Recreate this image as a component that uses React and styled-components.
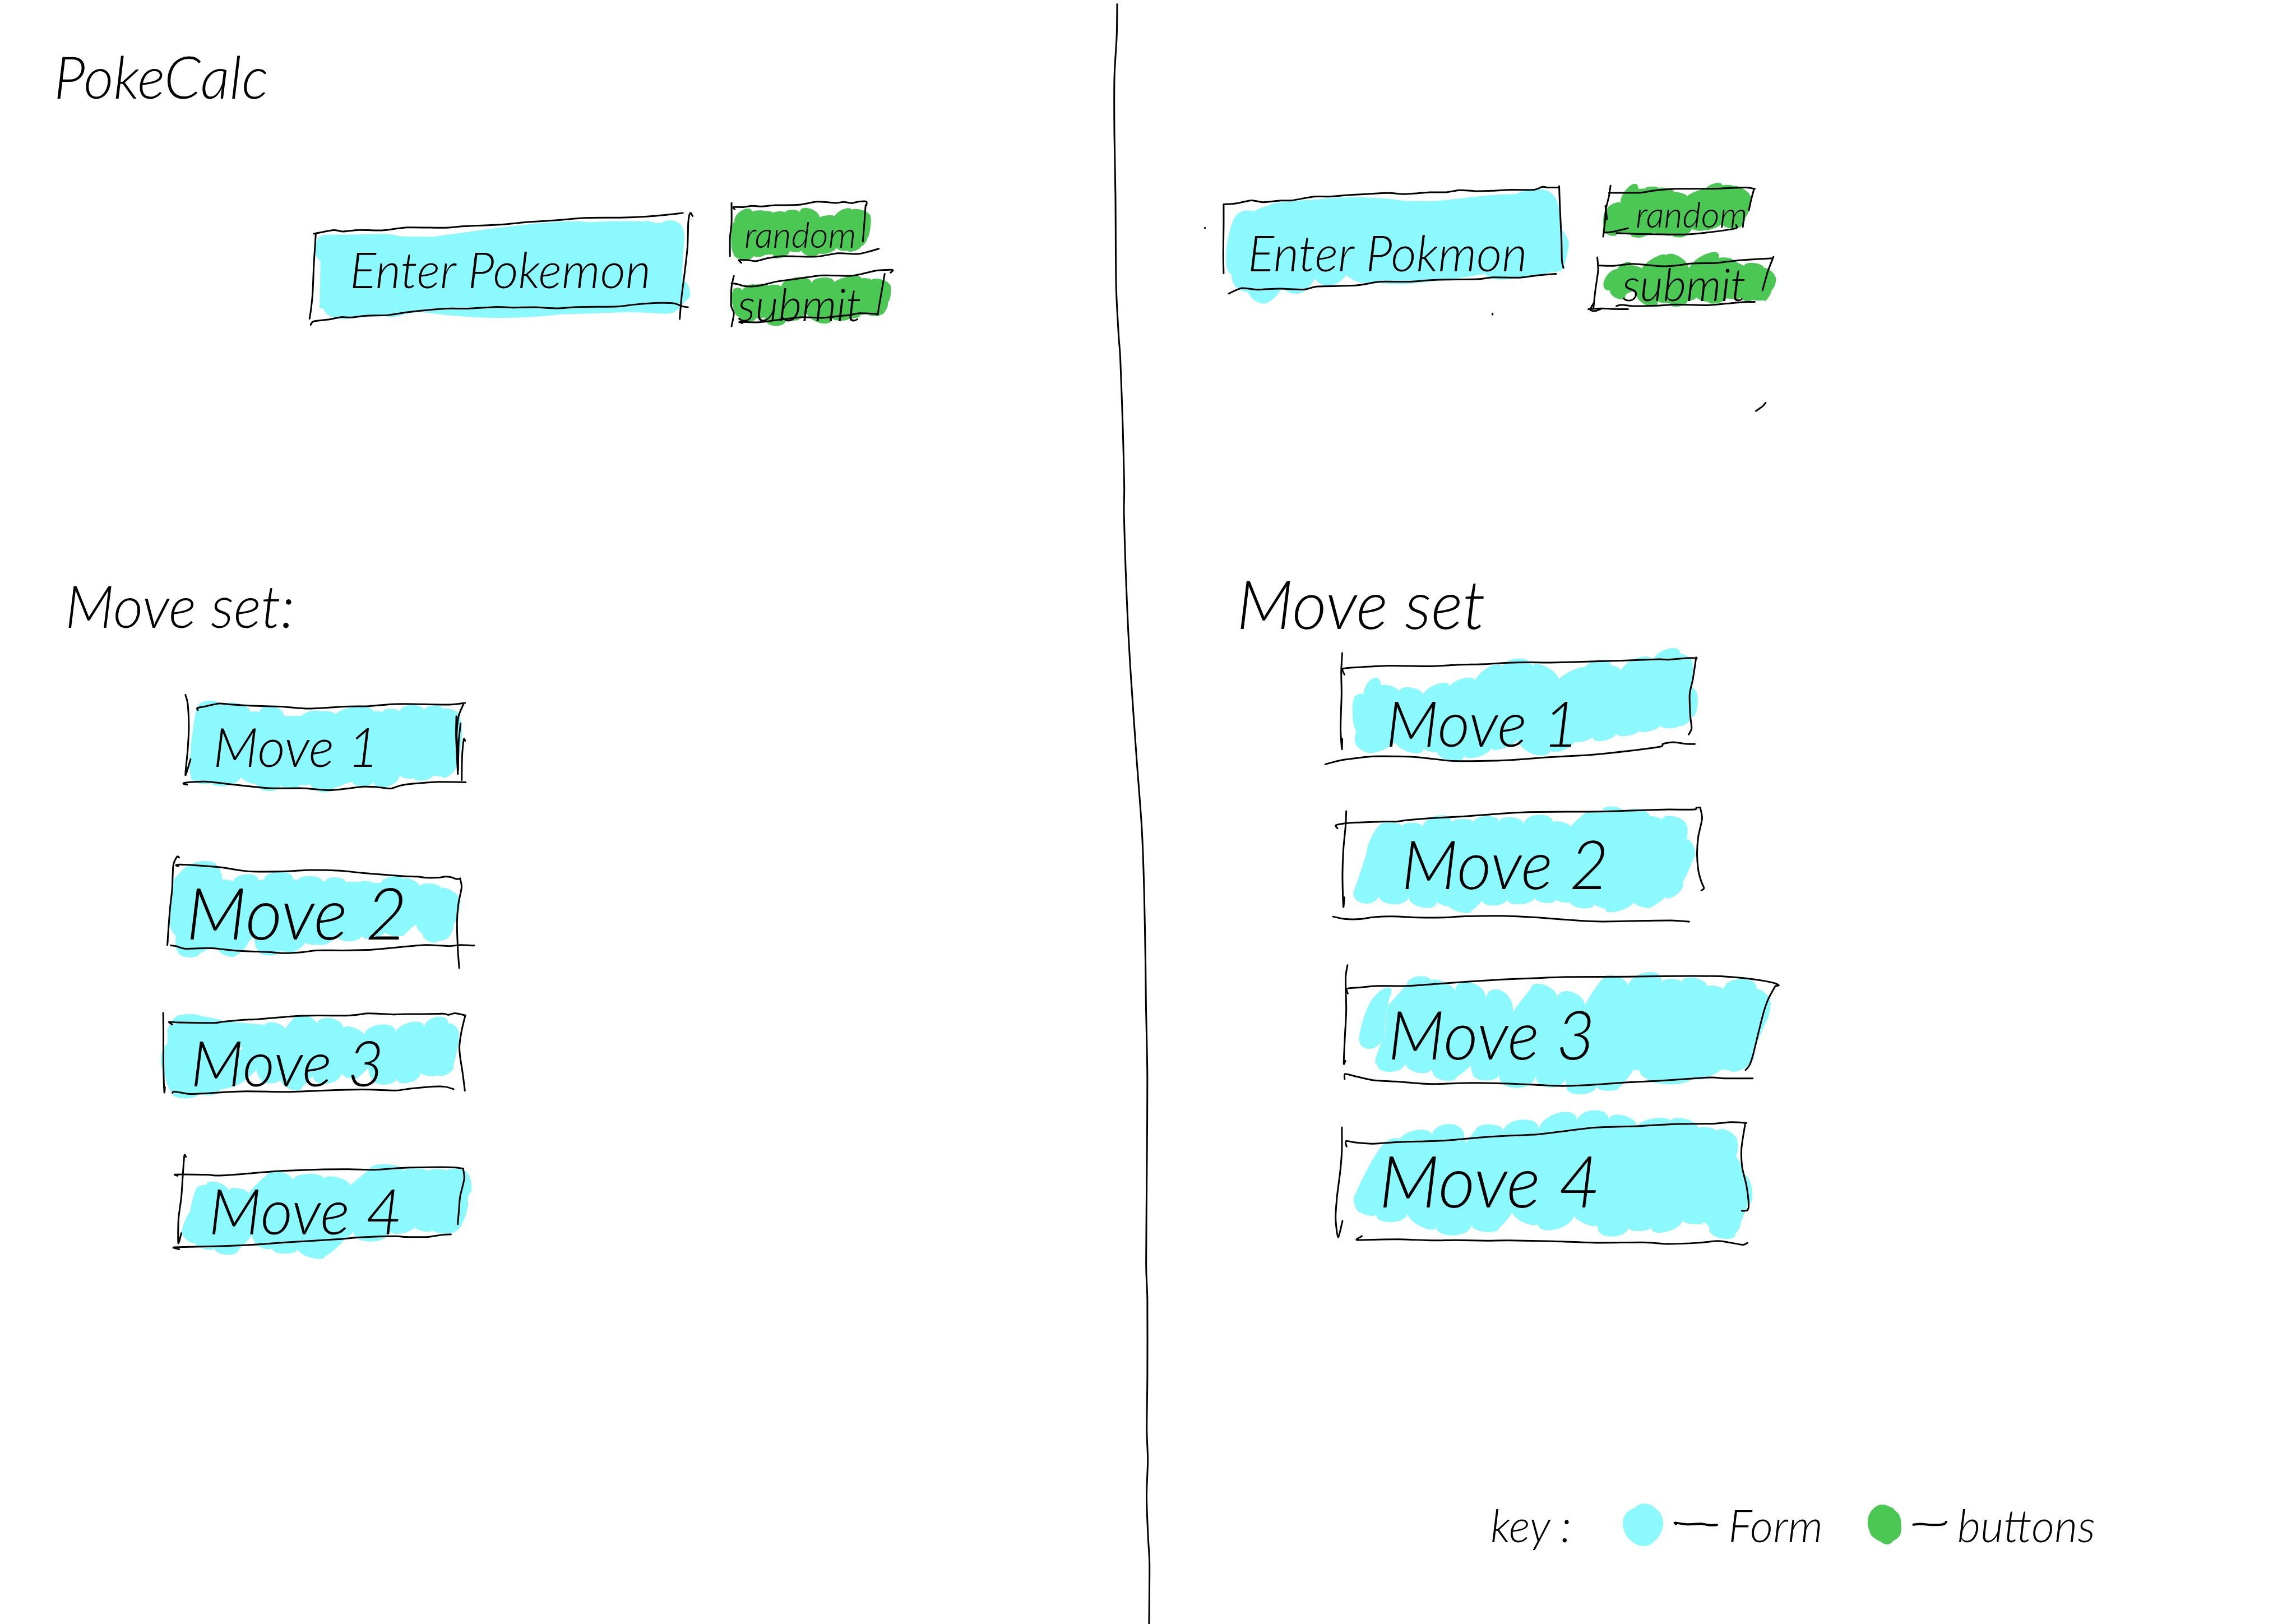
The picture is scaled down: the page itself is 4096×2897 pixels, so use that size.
import React from "react";
import styled, { createGlobalStyle } from "styled-components";

const INK = "#000000";
const CYAN = "#8cf9ff";
const GREEN = "#4ac853";

const GlobalStyle = createGlobalStyle`
  *, *::before, *::after { box-sizing: border-box; }
  body {
    margin: 0;
    background: #ffffff;
    color: ${INK};
    font-family: "Lato", "Open Sans", sans-serif;
    font-style: italic;
    font-weight: 300;
  }
`;

/* ---------- pen and marker helpers ---------- */

const parse = (text) => text.trim().split(/\s+/).map((pair) => pair.split(",").map(Number));

// A pen stroke: a smooth curve through every point.
function penPath(text) {
  const p = parse(text);
  let d = `M${p[0]}`;
  for (let i = 0; i < p.length - 1; i += 1) {
    const a = p[i - 1] || p[i];
    const b = p[i];
    const c = p[i + 1];
    const e = p[i + 2] || c;
    d += `C${b[0] + (c[0] - a[0]) / 8},${b[1] + (c[1] - a[1]) / 8} ${c[0] - (e[0] - b[0]) / 8},${c[1] - (e[1] - b[1]) / 8} ${c}`;
  }
  return d;
}

// A marker fill: valleys and peaks in turn, each peak a round bump.
function markerPath(text) {
  const p = parse(text);
  let d = `M${p[0]}`;
  for (let i = 0; i < p.length; i += 2) {
    const a = p[i];
    const peak = p[i + 1];
    const b = p[(i + 2) % p.length];
    const dx = (peak[0] - (a[0] + b[0]) / 2) * (4 / 3);
    const dy = (peak[1] - (a[1] + b[1]) / 2) * (4 / 3);
    d += `C${a[0] + dx},${a[1] + dy} ${b[0] + dx},${b[1] + dy} ${b}`;
  }
  return `${d}Z`;
}

const Drawing = styled.svg`
  position: absolute;
  inset: 0;
  width: 100%;
  height: 100%;
  overflow: visible;
  pointer-events: none;
`;

const Pen = styled.path`
  fill: none;
  stroke: ${INK};
  stroke-width: ${(p) => p.$weight || 3}px;
  stroke-linecap: round;
  stroke-linejoin: round;
  vector-effect: non-scaling-stroke;
`;

function Sketch({ art, color }) {
  return (
    <Drawing viewBox={art.view} preserveAspectRatio="none" aria-hidden="true">
      {(art.shapes || []).map((d) => <path key={d} d={d} fill={color} />)}
      {(art.marker || []).map((m) => <path key={m} d={markerPath(m)} fill={color} />)}
      {(art.holes || []).map((d) => <path key={d} d={d} fill="#ffffff" />)}
      {art.pen.map((s) => <Pen key={s} d={penPath(s)} />)}
    </Drawing>
  );
}

/* ---------- drawings ---------- */

const enterWide = {
  view: "16.5 107.8 1035.7 871.8",
  shapes: [
    "M75,322C120,318 150,322 185,318C210,315 245,312 262,330C290,335 330,332 350,336C370,325 400,318 440,303C520,275 600,250 670,238C700,234 730,234 755,240C790,232 850,232 885,235C905,228 915,238 920,245C930,243 938,245 940,240C950,222 970,222 985,250C995,280 997,320 995,380C992,460 990,540 990,605C1010,640 1015,700 1008,730C1000,755 990,765 985,790C975,820 965,835 945,833C900,825 860,820 820,825C770,830 720,835 680,836C620,855 560,862 500,860C430,855 370,840 320,822C290,830 275,838 262,848C250,858 240,855 230,850C190,848 160,858 125,869C95,865 75,845 70,800C60,800 58,795 60,770L62,492C50,470 48,440 50,400C50,360 55,325 75,322Z",
  ],
  pen: [
    "50,318 48,400 45,520 42,700 38,800 34,865",
    "45,315 95,291 120,300 160,290 220,293 285,274 385,276 430,266 520,256 600,238 670,227 740,212 830,210 900,203 950,192 992,180",
    "1017,200 1011,180 1006,240 1004,400 997,560 989,720 984,867",
    "37,905 45,882 85,870 115,855 140,857 180,846 235,842 290,822 385,800 440,800 515,789 560,793 610,791 670,798 720,790 825,786 870,773 930,763 970,766 990,785 1005,791",
  ],
};

const enterNarrow = {
  view: "80.4 62.6 897.6 813.8",
  shapes: [
    "M125,290C135,235 160,228 177,243C190,222 205,210 213,210C225,185 260,182 340,170C400,152 500,152 565,180L632,181C700,172 770,138 848,138C880,105 915,100 930,118C950,140 958,180 962,260C965,300 965,340 968,360C985,400 988,440 982,480C978,540 972,585 965,600C955,612 945,610 935,612C905,635 850,650 820,655C785,655 775,645 770,620C710,645 640,668 560,683C510,683 480,668 455,675C435,665 420,645 414,627C405,660 385,692 370,692C350,690 340,675 333,648C325,690 305,742 287,742C270,740 262,730 257,718L246,716C235,760 215,800 202,800C180,795 168,765 162,732C135,725 120,690 119,625C105,605 104,560 106,480C108,420 115,340 125,290Z",
  ],
  pen: [
    "100,200 130,195 170,176 200,187 245,177 275,176 330,153 370,153 420,144 520,131 560,138 630,127 670,127 705,114 745,120 790,118 840,112 895,112 917,94 930,98 957,98",
    "99,200 99,330 98,500 99,617",
    "960,90 962,220 966,420 967,540 971,585",
    "112,740 145,707 185,716 240,710 305,715 340,697 440,690 500,668 570,668 650,656 750,653 790,642 860,643 910,628 952,620",
    "51,341 51,344",
    "789,860 789,867",
  ],
};

const randomLeft = {
  view: "1092.5 115.1 517.8 406.8",
  marker: [
    "1125,240 1143,165 1170,172 1188,163 1203,170 1212,168 1225,180 1241,170 1254,180 1273,160 1293,180 1315,150 1344,210 1366,195 1382,205 1405,155 1425,165 1447,158 1470,190 1474,260 1464,350 1460,375 1450,395 1430,428 1413,418 1400,425 1387,405 1361,443 1343,430 1321,460 1297,422 1283,434 1267,425 1243,472 1224,452 1213,450 1200,455 1187,464 1173,458 1145,482 1122,440 1116,330",
  ],
  pen: [
    "1125,157 1122,142 1145,142 1170,134 1195,138 1230,130 1290,127 1335,107 1360,110 1385,115 1405,109 1425,116 1445,106 1463,106 1463,130",
    "1117,115 1117,250 1113,340 1113,460",
    "1461,130 1458,240 1454,365",
    "1142,503 1136,485 1160,486 1180,492 1210,473 1250,460 1335,463 1390,441 1440,446 1470,430 1495,412",
  ],
};

const submitLeft = {
  view: "1092.5 565.6 517.8 406.8",
  marker: [
    "1120,690 1131,665 1145,685 1160,650 1178,650 1195,640 1212,655 1228,645 1245,660 1283,598 1322,635 1353,598 1380,630 1425,590 1447,610 1460,602 1477,615 1500,610 1520,640 1526,690 1518,760 1512,815 1500,835 1487,848 1470,840 1455,838 1446,850 1432,862 1420,860 1398,878 1375,862 1341,891 1308,810 1302,845 1290,868 1275,878 1258,868 1228,912 1202,855 1190,862 1180,860 1157,884 1135,850 1120,780",
  ],
  pen: [
    "1117,637 1130,640 1150,654 1170,656 1195,648 1230,626 1270,612 1350,585 1420,588 1450,576 1490,553 1530,549 1525,567",
    "1123,588 1117,660 1116,780 1123,830 1117,915",
    "1510,575 1500,720 1492,840",
    "1145,894 1138,886 1190,888 1245,870 1300,855 1350,860 1400,846 1420,842 1445,830 1490,835",
  ],
};

const randomRight = {
  view: "1018.4 69.3 517.8 379.8",
  marker: [
    "1083,230 1100,195 1117,195 1140,92 1163,105 1172,105 1182,103 1199,92 1215,103 1240,105 1255,130 1272,130 1289,152 1315,118 1333,117 1358,74 1378,88 1392,82 1408,90 1435,110 1448,150 1452,200 1437,280 1432,320 1420,340 1398,345 1378,317 1352,350 1336,350 1318,360 1302,345 1290,380 1280,392 1266,400 1250,388 1225,385 1205,368 1195,380 1178,392 1160,401 1145,388 1125,375 1108,380 1095,390 1080,372 1073,300",
  ],
  pen: [
    "1092,87 1088,150 1080,230 1078,300 1073,395",
    "1079,210 1083,292",
    "1088,130 1165,130 1200,118 1260,106 1350,106 1400,101 1440,98 1462,106",
    "1460,108 1452,180 1447,235",
    "1076,371 1100,365 1137,345",
    "1107,374 1180,380 1280,382 1340,370 1412,346 1414,325",
  ],
};

const submitRight = {
  view: "1018.4 489.8 517.8 379.8",
  marker: [
    "1110,590 1132,550 1145,570 1160,575 1172,588 1212,514 1233,525 1262,508 1293,588 1342,496 1368,530 1388,522 1405,537 1425,560 1435,570 1462,556 1485,585 1505,605 1512,640 1516,670 1505,720 1495,770 1485,778 1470,782 1455,776 1440,785 1427,765 1408,772 1390,768 1362,800 1343,782 1330,785 1312,762 1302,780 1290,782 1265,818 1243,793 1228,797 1213,785 1188,814 1157,740 1145,730 1130,755 1110,770 1090,720 1076,660",
  ],
  pen: [
    "1058,520 1060,600 1053,720 1048,830",
    "1060,570 1100,572 1150,560 1220,574 1260,570 1300,558 1360,555 1390,547 1430,537 1508,526",
    "1510,517 1495,610 1482,720",
    "1035,834 1070,830 1100,833 1137,834",
    "1048,800 1040,838 1053,845 1068,832",
    "1107,815 1120,808 1150,815 1210,813 1260,806 1340,810 1400,798 1440,790 1462,790",
    "1490,1400 1482,1422 1465,1450",
  ],
};

const leftMoves = [
  {
    name: "Move 1", size: 96, left: 104, top: 0,
    art: {
      view: "382.6 735.6 1186.7 871.8",
      marker: [
        "533,925 577,880 617,921 672,896 718,955 735,950 752,957 795,918 838,978 870,980 903,978 940,946 967,959 990,948 1021,969 1055,933 1078,933 1110,912 1155,950 1170,948 1188,953 1216,934 1247,954 1289,908 1331,946 1366,912 1398,935 1425,934 1452,960 1463,1010 1465,1060 1462,1190 1445,1310 1425,1362 1398,1374 1380,1370 1363,1368 1327,1399 1297,1378 1272,1384 1247,1362 1200,1440 1156,1402 1118,1434 1080,1404 1065,1414 1050,1420 1030,1438 1012,1442 975,1474 932,1420 912,1428 895,1422 862,1450 826,1424 783,1466 741,1415 710,1408 688,1371 667,1412 640,1423 612,1434 580,1412 548,1419 520,1395 506,1330 510,1220 518,1060",
      ],
      pen: [
        "491,843 499,900 503,1050 499,1200 491,1363 509,1260",
        "535,942 533,928 560,918 610,899 650,905 730,914 830,919 925,932 1050,919 1140,916 1200,906 1265,902 1420,906 1478,895",
        "497,1425 485,1420 490,1412 560,1405 640,1420 700,1432 790,1448 900,1448 990,1460 1040,1455 1120,1438 1165,1440 1215,1450 1250,1430 1300,1418 1385,1407 1480,1409",
        "1472,903 1455,980 1448,1100 1453,1230 1452,1355",
        "1447,982 1446,1110 1452,1355",
        "1462,1028 1455,1150 1453,1330",
        "1478,1140 1473,1132 1467,1250 1466,1395",
      ],
    },
  },
  {
    name: "Move 2", size: 128, left: 56, top: 48,
    art: {
      view: "30.1 -76.2 1539.6 871.8",
      marker: [
        "113,275 145,195 200,145 265,120 312,150 333,190 335,242 360,241 390,252 452,205 503,242 515,242 530,242 602,190 663,240 675,241 688,242 745,217 795,250 803,250 813,250 858,225 903,255 940,255 972,257 998,249 1027,262 1050,261 1067,262 1117,220 1165,240 1210,242 1242,287 1295,266 1341,300 1385,308 1422,360 1425,430 1397,530 1387,590 1365,620 1350,634 1328,635 1285,640 1258,590 1235,560 1229,524 1200,560 1175,592 1132,607 1087,580 1066,603 1045,622 1017,628 975,606 920,640 866,604 850,627 830,645 775,664 720,645 685,695 650,710 628,708 603,697 552,732 500,690 488,650 487,600 472,625 455,655 428,705 400,728 365,737 323,697 300,688 272,692 255,706 238,712 187,744 137,705 126,660 131,600 105,560 98,500 103,390",
      ],
      pen: [
        "142,97 132,92 115,150 110,300 100,430 92,580 88,663 90,630",
        "138,153 127,148 140,143 210,147 330,160 420,180 480,188 620,187 750,178 880,183 980,197 1160,217 1230,221 1275,228 1330,227 1360,221 1385,224 1412,237 1428,233",
        "1428,233 1435,290 1420,400 1414,520 1418,700 1424,813",
        "103,667 130,672 170,688 270,684 320,688 400,700 500,707 560,710 620,717 710,710 770,699 890,699 1000,696 1060,690 1160,677 1270,664 1375,671 1430,664 1493,668",
      ],
    },
  },
  {
    name: "Move 3", size: 112, left: 64, top: 40,
    art: {
      view: "30.1 -97.3 1539.6 785.6",
      marker: [
        "90,200 108,125 150,92 195,83 240,95 290,105 340,122 450,136 538,144 588,136 627,177 650,130 680,98 735,97 773,150 832,106 895,170 936,160 989,204 1070,144 1132,193 1205,130 1261,162 1325,98 1373,143 1405,152 1422,200 1415,290 1395,380 1375,430 1322,437 1290,445 1249,426 1188,485 1138,450 1080,495 1020,450 1011,425 1010,388 990,420 965,445 930,459 885,428 812,490 754,436 732,475 705,505 655,523 607,462 555,488 515,460 500,430 498,400 465,446 425,485 380,510 330,520 310,545 285,556 260,555 236,538 172,575 110,540 90,500 82,455 64,400 60,350 68,290 88,262 89,230",
      ],
      holes: ["M412,276L435,276L414,304Z"],
      pen: [
        "69,75 70,200 70,380 74,537 77,510",
        "111,144 96,128 145,132 300,134 345,127 430,117 510,112 670,95 780,91 900,92 960,86 1010,79 1120,85 1180,83 1255,83 1350,80 1375,87 1405,78 1452,90",
        "1452,90 1435,180 1425,270 1428,330 1440,430 1450,530",
        "111,542 118,535 145,540 190,549 250,547 330,540 450,534 650,537 780,530 980,523 1130,529 1200,518 1310,506 1360,507 1398,521",
      ],
    },
  },
  {
    name: "Move 4", size: 112, left: 96, top: 24,
    art: {
      view: "30.1 793.2 1539.6 785.6",
      marker: [
        "192,1240 205,1160 220,1108 238,1085 267,1084 315,1065 369,1117 412,1100 459,1132 510,1060 550,1020 610,1005 660,1056 738,1016 807,1052 860,1034 925,1082 975,1030 1015,988 1095,960 1167,1000 1222,985 1280,1000 1325,988 1366,1000 1405,985 1447,1000 1478,1060 1470,1130 1465,1150 1462,1170 1458,1240 1435,1300 1415,1345 1375,1362 1335,1362 1300,1342 1265,1352 1219,1324 1165,1362 1111,1351 1015,1411 942,1350 918,1382 890,1410 852,1460 810,1495 745,1505 686,1452 628,1482 568,1452 515,1445 490,1410 478,1390 475,1370 448,1415 415,1455 358,1488 302,1446 262,1456 213,1418 168,1390 158,1340 170,1285",
      ],
      pen: [
        "173,916 166,908 160,1000 152,1150 139,1280 138,1420 152,1362",
        "135,1027 121,1020 160,1019 270,1021 320,1026 420,1018 500,1009 620,998 800,990 920,989 1040,992 1120,985 1200,979 1385,977 1442,985",
        "1442,985 1447,1045 1428,1150 1422,1240 1417,1310",
        "142,1456 116,1445 190,1442 350,1437 500,1428 650,1414 850,1399 980,1386 1130,1380 1180,1384 1280,1384 1340,1373 1386,1369",
      ],
    },
  },
];

const rightMoves = [
  {
    name: "Move 1", size: 112, left: 116, top: 40,
    art: {
      view: "303.6 570.6 1429.3 871.8",
      marker: [
        "406,930 420,898 435,907 464,797 489,852 514,842 547,882 580,855 619,901 668,830 698,857 745,795 777,820 828,716 859,740 910,668 956,730 992,714 1037,802 1090,735 1114,742 1160,678 1197,716 1215,722 1229,747 1285,660 1323,694 1372,605 1410,642 1435,655 1448,700 1450,780 1447,860 1465,950 1445,1050 1430,1090 1407,1102 1378,1120 1351,1102 1312,1141 1287,1130 1245,1169 1215,1148 1175,1200 1142,1175 1110,1205 1088,1200 1042,1268 1012,1246 965,1291 911,1190 862,1253 832,1238 785,1307 746,1286 708,1332 662,1270 645,1273 619,1252 582,1277 534,1210 485,1269 467,1262 440,1272 410,1210 410,1170 416,1125 403,1060",
      ],
      pen: [
        "370,632 367,750 368,900 365,1120 369,1255 370,1187",
        "377,772 373,733 430,723 515,714 620,718 670,715 730,708 810,704 870,696 950,692 1010,694 1150,686 1230,681 1345,672 1375,675 1430,665 1462,665",
        "1460,660 1450,800 1440,900 1442,1040 1446,1120 1437,1160",
        "318,1353 370,1325 465,1302 540,1302 595,1306 650,1318 715,1332 840,1330 920,1321 1000,1308 1120,1294 1200,1279 1345,1241 1358,1220 1390,1210 1425,1220 1456,1222",
      ],
    },
  },
  {
    name: "Move 2", size: 120, left: 144, top: 0,
    art: {
      view: "19.2 58.5 1483.1 871.8",
      marker: [
        "205,260 240,228 279,259 311,231 345,259 397,184 437,235 472,207 508,231 550,188 590,227 630,197 668,243 717,180 762,235 788,225 818,259 843,205 870,165 895,160 920,158 953,127 993,170 1033,143 1071,193 1090,193 1110,214 1150,192 1188,250 1192,290 1186,337 1212,390 1210,460 1195,540 1175,620 1158,695 1119,713 1098,752 1075,775 1050,780 1020,748 963,808 932,784 915,782 892,757 857,786 816,743 795,747 770,729 738,751 702,717 655,760 615,725 573,768 536,731 519,772 500,800 470,813 428,770 408,765 390,743 345,781 300,710 250,760 205,699 160,755 124,680 145,560 168,410 183,320",
      ],
      pen: [
        "101,157 99,250 92,400 89,560 90,690 92,778 95,715",
        "73,268 68,248 105,234 140,230 230,224 260,224 300,214 380,201 480,190 560,178 680,163 900,159 1050,150 1130,146 1213,146 1220,134 1232,133",
        "1232,133 1238,205 1226,320 1222,430 1226,540 1235,610 1244,655 1236,670",
        "59,840 95,855 145,856 190,843 250,839 330,846 410,846 480,838 600,835 720,847 850,867 920,872 1050,867 1140,865 1197,873",
      ],
    },
  },
  {
    name: "Move 3", size: 120, left: 120, top: 64,
    art: {
      view: "19.2 -76.2 1483.1 712",
      shapes: [
        "M232,131C250,130 248,150 240,180L232,228L222,400C210,430 195,455 175,455C145,455 138,410 143,380C155,290 170,200 205,155C215,140 225,132 232,131Z",
      ],
      marker: [
        "232,228 265,170 295,110 338,70 371,105 405,95 449,149 498,103 547,187 600,150 632,265 660,200 690,140 735,117 776,191 820,153 864,230 890,150 920,90 960,68 1001,122 1065,49 1107,105 1140,85 1173,105 1212,78 1255,127 1278,121 1307,139 1365,85 1412,140 1440,160 1453,200 1455,250 1440,320 1420,400 1400,480 1380,550 1325,568 1310,566 1300,561 1270,595 1235,614 1215,613 1200,597 1145,643 1055,605 1043,590 1040,568 1030,568 1019,562 998,615 975,655 935,677 902,650 848,696 805,650 802,630 802,607 750,659 708,595 640,662 591,585 545,622 505,580 500,560 500,538 478,575 455,600 415,622 378,580 372,565 372,554 332,582 290,530 240,577 200,530 198,490 222,400 228,320",
      ],
      pen: [
        "105,12 99,80 101,250 97,380 93,530 98,518",
        "106,162 104,136 145,130 200,122 290,122 400,110 500,98 600,88 700,81 820,74 1000,73 1200,69 1310,72 1400,86 1460,103 1483,118 1472,123",
        "1472,123 1450,190 1435,260 1418,370 1402,480 1390,540 1377,567",
        "96,615 97,588 125,598 185,620 260,628 320,636 375,641 500,635 640,640 780,651 880,646 1000,632 1100,624 1200,613 1270,606 1310,611 1400,611",
      ],
    },
  },
  {
    name: "Move 4", size: 128, left: 104, top: 40,
    art: {
      view: "19.2 730.8 1483.1 712",
      marker: [
        "218,965 248,930 270,942 330,884 374,922 428,853 478,920 482,940 483,962 497,920 515,885 560,855 603,890 665,830 715,881 788,791 836,847 892,780 940,838 982,806 1030,865 1095,821 1135,850 1178,823 1226,877 1255,870 1285,892 1325,892 1350,950 1352,990 1343,1032 1360,1060 1366,1120 1397,1190 1385,1280 1375,1320 1360,1385 1355,1410 1345,1430 1305,1459 1260,1410 1258,1392 1242,1372 1212,1383 1176,1364 1118,1425 1077,1395 1038,1419 1003,1399 950,1448 905,1400 902,1390 900,1380 872,1386 829,1339 760,1414 715,1366 680,1382 631,1320 612,1365 590,1400 545,1424 502,1384 440,1442 387,1386 350,1403 296,1328 243,1372 197,1330 175,1338 150,1320 128,1280 132,1220 160,1120 190,1030 205,990",
      ],
      pen: [
        "87,870 87,990 82,1100 72,1230 67,1350 75,1452 89,1365",
        "102,972 100,943 130,950 190,957 270,948 410,941 520,925 600,916 715,907 800,890 900,871 1030,864 1150,853 1270,851 1330,843 1380,847",
        "1376,850 1364,980 1366,1080 1380,1180 1387,1280 1382,1310 1365,1312",
        "151,1446 134,1466 180,1465 270,1463 380,1469 450,1467 550,1470 620,1469 760,1473 900,1481 1050,1479 1130,1487 1230,1481 1290,1472 1340,1484 1370,1492 1383,1482",
      ],
    },
  },
];

const DIVIDER =
  "100,4 97,35 82,75 82,130 89,190 93,275 110,325 120,345 136,410 146,470 144,495 155,550 172,610 190,655 225,730 260,800 275,860 284,930 287,970 296,1040 293,1120 288,1220 296,1255 296,1330 292,1380 299,1410 291,1445 301,1485 310,1510 307,1568";

/* ---------- page ---------- */

const Board = styled.main`
  display: grid;
  grid-template-columns: 33fr 72px 34fr;
  min-height: 100vh;
  overflow: hidden;
`;

const Panel = styled.section`
  display: flex;
  flex-direction: column;
  align-items: flex-start;
  padding-top: ${(p) => p.$top}px;
`;

const Divider = styled.svg`
  width: 100%;
  height: 100%;
  overflow: visible;
`;

const Title = styled.h1`
  margin: 0 0 160px;
  padding-left: 96px;
  font-size: 104px;
  font-weight: 300;
  line-height: 128px;
`;

const SearchForm = styled.form`
  display: flex;
  align-items: center;
  gap: 28px;
  margin-left: ${(p) => p.$indent}px;
`;

const ButtonStack = styled.div`
  display: flex;
  flex-direction: column;
  gap: 12px;
`;

const FieldBox = styled.div`
  position: relative;
  width: ${(p) => p.$width}px;
  height: 240px;
`;

const TextInput = styled.input`
  position: relative;
  display: block;
  width: 100%;
  height: 100%;
  padding: ${(p) => p.$top}px 0 0 ${(p) => p.$left}px;
  border: 0;
  outline: 0;
  background: transparent;
  color: inherit;
  font: inherit;
  font-size: ${(p) => p.$size}px;
`;

const SketchButton = styled.button`
  position: relative;
  width: 360px;
  height: 112px;
  padding: 0 0 0 ${(p) => p.$left}px;
  border: 0;
  background: transparent;
  color: inherit;
  font: inherit;
  font-size: ${(p) => p.$size}px;
  line-height: 104px;
  text-align: left;
  cursor: pointer;
`;

const ButtonText = styled.span`
  position: relative;
`;

const SectionTitle = styled.h2`
  margin: ${(p) => p.$above}px 0 ${(p) => p.$below}px;
  padding-left: ${(p) => p.$indent}px;
  font-size: ${(p) => p.$size}px;
  font-weight: 300;
  line-height: 96px;
`;

const MoveList = styled.div`
  display: flex;
  flex-direction: column;
  gap: 32px;
  margin-left: ${(p) => p.$indent}px;
`;

const Legend = styled.div`
  display: flex;
  align-items: center;
  margin: 456px 0 0 605px;
  font-size: 80px;
  line-height: 120px;
`;

const LegendItem = styled.span`
  display: flex;
  align-items: center;
  gap: 20px;
  margin-left: ${(p) => p.$before}px;
`;

const Swatch = styled.svg`
  width: ${(p) => p.$size}px;
  height: 76px;
`;

const Dash = styled.svg`
  width: ${(p) => p.$size}px;
  height: 16px;
  overflow: visible;
`;

function Field({ name, art, width, size, left, top }) {
  return (
    <FieldBox $width={width}>
      <Sketch art={art} color={CYAN} />
      <TextInput aria-label={name} defaultValue={name} $size={size} $left={left} $top={top} />
    </FieldBox>
  );
}

function ActionButton({ type, art, left, size, children }) {
  return (
    <SketchButton type={type} $left={left} $size={size}>
      <Sketch art={art} color={GREEN} />
      <ButtonText>{children}</ButtonText>
    </SketchButton>
  );
}

const stay = (event) => event.preventDefault();

export default function App() {
  return (
    <>
      <GlobalStyle />
      <Board>
        <Panel $top={72}>
          <Title>PokeCalc</Title>
          <SearchForm $indent={540} onSubmit={stay}>
            <Field name="Enter Pokemon" art={enterWide} width={720} size={88} left={84} top={0} />
            <ButtonStack>
              <ActionButton type="button" art={randomLeft} left={40} size={64}>random</ActionButton>
              <ActionButton type="submit" art={submitLeft} left={28} size={80}>submit</ActionButton>
            </ButtonStack>
          </SearchForm>
          <SectionTitle $above={432} $below={82} $indent={116} $size={104}>Move set:</SectionTitle>
          <MoveList $indent={276}>
            {leftMoves.map((move) => <Field key={move.name} width={600} {...move} />)}
          </MoveList>
        </Panel>

        <Divider viewBox="60 0 262 1568" preserveAspectRatio="none" aria-hidden="true">
          <Pen d={penPath(DIVIDER)} />
        </Divider>

        <Panel $top={324}>
          <SearchForm $indent={116} onSubmit={stay}>
            <Field name="Enter Pokmon" art={enterNarrow} width={624} size={88} left={56} top={12} />
            <ButtonStack>
              <ActionButton type="button" art={randomRight} left={96} size={64}>random</ActionButton>
              <ActionButton type="submit" art={submitRight} left={72} size={80}>submit</ActionButton>
            </ButtonStack>
          </SearchForm>
          <SectionTitle $above={464} $below={24} $indent={152} $size={120}>Move set</SectionTitle>
          <MoveList $indent={302}>
            {rightMoves.map((move) => <Field key={move.name} width={828} {...move} />)}
          </MoveList>
          <Legend>
            <span>key :</span>
            <LegendItem $before={92}>
              <Swatch $size={72} viewBox="361 205 97 275" preserveAspectRatio="none" aria-hidden="true">
                <path fill={CYAN} d="M412,205C424,206 433,218 438,234C448,250 451,265 453,282C459,300 458,330 458,350C455,400 445,430 437,448C430,468 422,480 411,480C400,480 392,470 386,455C375,440 368,410 365,385C361,360 361,340 361,320C363,280 372,250 390,234C396,215 404,205 412,205Z" />
              </Swatch>
              <Dash $size={76} viewBox="480 308 103 58" preserveAspectRatio="none" aria-hidden="true">
                <Pen $weight={4} d={penPath("484,332 482,324 510,334 545,331 565,340 583,338")} />
              </Dash>
              <span>Form</span>
            </LegendItem>
            <LegendItem $before={80}>
              <Swatch $size={60} viewBox="940 230 80 260" preserveAspectRatio="none" aria-hidden="true">
                <path fill={GREEN} d="M974,237C982,237 986,243 990,248C998,252 1002,262 1004,272C1012,285 1016,300 1018,320C1020,350 1021,390 1018,415C1015,440 1006,450 1000,460C996,472 992,480 986,480C978,478 974,470 970,462C962,455 956,440 950,430C944,410 940,370 940,345C940,310 944,285 952,265C958,248 966,237 974,237Z" />
              </Swatch>
              <Dash $size={60} viewBox="1040 290 80 58" preserveAspectRatio="none" aria-hidden="true">
                <Pen $weight={4} d={penPath("1042,318 1060,314 1080,319 1105,319 1116,312 1120,300")} />
              </Dash>
              <span>buttons</span>
            </LegendItem>
          </Legend>
        </Panel>
      </Board>
    </>
  );
}
